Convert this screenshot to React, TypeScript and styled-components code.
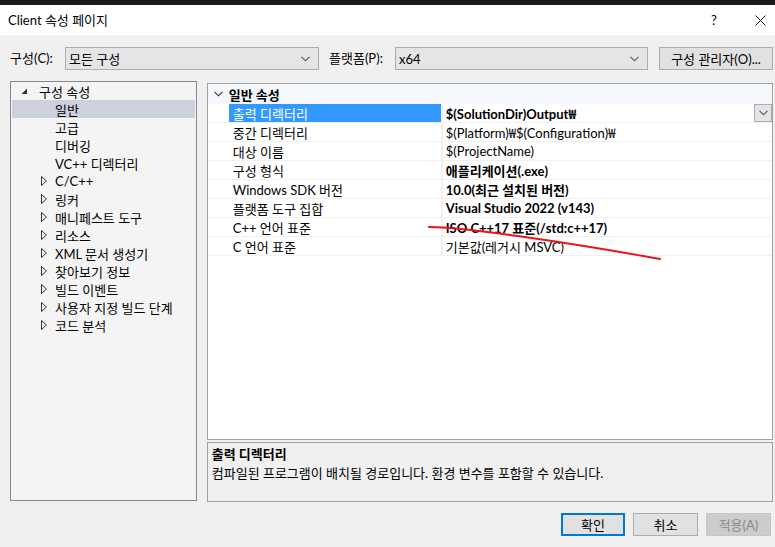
import React from 'react';
import styled, { createGlobalStyle } from 'styled-components';

const GlobalStyle = createGlobalStyle`
  html, body {
    margin: 0;
    padding: 0;
    background: #f0f0f0;
  }
  body {
    font-family: Lato, "Noto Sans CJK KR", sans-serif;
    font-size: 13px;
    color: #000;
  }
`;

const Window = styled.div`
  position: relative;
  width: 775px;
  height: 547px;
  overflow: hidden;
  background: #f0f0f0;
  display: flex;
  flex-direction: column;
`;

const TopStrip = styled.div`
  height: 5px;
  background: #1b1b1c;
`;

const TitleBar = styled.div`
  height: 30px;
  background: #fff;
  display: flex;
  align-items: center;
  padding-left: 8px;
`;

const Title = styled.span`
  flex: 1;
  line-height: 16px;
`;

const TitleControls = styled.div`
  display: flex;
  margin-right: -8px;
`;

const TitleButton = styled.span`
  width: 46px;
  display: flex;
  justify-content: center;
  align-items: center;
  font-size: 13px;
`;

const ConfigRow = styled.div`
  height: 46px;
  box-sizing: border-box;
  padding: 12px 0 0 10px;
  display: flex;
  align-items: flex-start;
`;

const Label = styled.span<{ width: number }>`
  width: ${({ width }) => width}px;
  height: 23px;
  line-height: 23px;
  white-space: nowrap;
`;

const Combo = styled.div<{ width: number }>`
  width: ${({ width }) => width}px;
  height: 23px;
  box-sizing: border-box;
  border: 1px solid #adadad;
  background: #e5e5e5;
  display: flex;
  align-items: center;
  padding: 0 8px 0 3px;
`;

const ComboText = styled.span`
  flex: 1;
`;

const PushButton = styled.button<{ width: number; primary?: boolean; disabled?: boolean }>`
  width: ${({ width }) => width}px;
  height: 23px;
  box-sizing: border-box;
  margin: 0;
  padding: 0;
  font-family: inherit;
  font-size: 13px;
  color: ${({ disabled }) => (disabled ? '#8a8a8a' : '#000')};
  background: ${({ disabled }) => (disabled ? '#cccccc' : '#e1e1e1')};
  border: ${({ primary, disabled }) =>
    primary ? '2px solid #0078d7' : disabled ? '1px dotted #bfbfbf' : '1px solid #adadad'};
`;

const Main = styled.div`
  display: flex;
  gap: 10px;
  padding: 0 2px 0 10px;
`;

const TreePanel = styled.div`
  width: 187px;
  height: 420px;
  box-sizing: border-box;
  border: 1px solid #828790;
  background: #f4f4f4;
  padding: 0 1px 1px;
`;

const TreeRow = styled.div<{ indent: number; selected?: boolean }>`
  height: 18px;
  display: flex;
  align-items: center;
  padding-left: ${({ indent }) => indent}px;
  background: ${({ selected }) => (selected ? '#cdd1de' : 'transparent')};
  white-space: nowrap;
`;

const Toggle = styled.span`
  width: 14px;
  display: flex;
  align-items: center;
`;

const RightColumn = styled.div`
  width: 567px;
  display: flex;
  flex-direction: column;
  gap: 2px;
  padding-top: 2px;
`;

const Grid = styled.div`
  height: 357px;
  box-sizing: border-box;
  border: 1px solid #a0a0a0;
  background: #fff;
`;

const GroupHeader = styled.div`
  height: 20px;
  background: #f4f7fc;
  display: flex;
  align-items: center;
  font-weight: 700;
`;

const Gutter = styled.span`
  width: 21px;
  display: flex;
  justify-content: center;
  align-items: center;
  flex-shrink: 0;
`;

const PropRow = styled.div`
  height: 19px;
  display: flex;
  box-sizing: border-box;
  border-bottom: 1px solid #f0f0f0;
`;

const NameCell = styled.div<{ selected?: boolean }>`
  width: 214px;
  padding-left: 4px;
  box-sizing: border-box;
  display: flex;
  align-items: center;
  border-right: 2px solid #f0f0f0;
  background: ${({ selected }) => (selected ? '#3399ff' : '#fff')};
  color: ${({ selected }) => (selected ? '#fff' : '#000')};
`;

const ValueCell = styled.div<{ bold?: boolean }>`
  flex: 1;
  padding-left: 3px;
  display: flex;
  align-items: center;
  font-weight: ${({ bold }) => (bold ? 700 : 400)};
`;

const ValueText = styled.span`
  flex: 1;
  white-space: pre;
`;

// Windows Korean fonts draw the backslash as a won sign
const Won = styled.span`
  font-family: "Noto Sans CJK KR", sans-serif;
`;

const DropButton = styled.span`
  width: 18px;
  height: 18px;
  box-sizing: border-box;
  border: 1px solid #adadad;
  background: #e5e5e5;
  display: flex;
  justify-content: center;
  align-items: center;
`;

const Description = styled.div`
  height: 60px;
  box-sizing: border-box;
  border: 1px solid #a0a0a0;
  padding: 3px 4px;
  display: flex;
  flex-direction: column;
  gap: 2px;
`;

const DescTitle = styled.span`
  font-weight: 700;
  line-height: 17px;
`;

const DescText = styled.span`
  line-height: 17px;
`;

const Footer = styled.div`
  display: flex;
  justify-content: flex-end;
  gap: 8px;
  padding: 11px 4px 0 0;
`;

const Annotation = styled.svg`
  position: absolute;
  left: 0;
  top: 0;
  pointer-events: none;
`;

const Chevron = ({ color = '#444' }: { color?: string }) => (
  <svg width="9" height="6" viewBox="0 0 9 6">
    <polyline points="0.5,0.8 4.5,4.8 8.5,0.8" fill="none" stroke={color} strokeWidth="1.1" />
  </svg>
);

const Expanded = () => (
  <svg width="7" height="7" viewBox="0 0 7 7">
    <polygon points="6,0.5 6,6 0.5,6" fill="#333" />
  </svg>
);

const Collapsed = () => (
  <svg width="6" height="10" viewBox="0 0 6 10">
    <polygon points="0.5,0.5 5.5,5 0.5,9.5" fill="none" stroke="#333" strokeWidth="1" />
  </svg>
);

const CloseIcon = () => (
  <svg width="11" height="11" viewBox="0 0 11 11">
    <path d="M0.5 0.5 L10.5 10.5 M10.5 0.5 L0.5 10.5" stroke="#111" strokeWidth="1" />
  </svg>
);

const withWon = (text: string) =>
  text.split('₩').map((part, i) => (
    <React.Fragment key={i}>
      {i > 0 && <Won>₩</Won>}
      {part}
    </React.Fragment>
  ));

interface TreeItem {
  label: string;
  expandable?: boolean;
  selected?: boolean;
}

const treeItems: TreeItem[] = [
  { label: '일반', selected: true },
  { label: '고급' },
  { label: '디버깅' },
  { label: 'VC++ 디렉터리' },
  { label: 'C/C++', expandable: true },
  { label: '링커', expandable: true },
  { label: '매니페스트 도구', expandable: true },
  { label: '리소스', expandable: true },
  { label: 'XML 문서 생성기', expandable: true },
  { label: '찾아보기 정보', expandable: true },
  { label: '빌드 이벤트', expandable: true },
  { label: '사용자 지정 빌드 단계', expandable: true },
  { label: '코드 분석', expandable: true },
];

interface Property {
  name: string;
  value: string;
  bold?: boolean;
}

const properties: Property[] = [
  { name: '출력 디렉터리', value: '$(SolutionDir)Output₩', bold: true },
  { name: '중간 디렉터리', value: '$(Platform)₩$(Configuration)₩' },
  { name: '대상 이름', value: '$(ProjectName)' },
  { name: '구성 형식', value: '애플리케이션(.exe)', bold: true },
  { name: 'Windows SDK 버전', value: '10.0(최근 설치된 버전)', bold: true },
  { name: '플랫폼 도구 집합', value: 'Visual Studio 2022 (v143)', bold: true },
  { name: 'C++ 언어 표준', value: 'ISO C++17 표준(/std:c++17)', bold: true },
  { name: 'C 언어 표준', value: '기본값(레거시 MSVC)' },
];

const App: React.FC = () => (
  <Window>
    <GlobalStyle />
    <TopStrip />
    <TitleBar>
      <Title>Client 속성 페이지</Title>
      <TitleControls>
        <TitleButton>?</TitleButton>
        <TitleButton>
          <CloseIcon />
        </TitleButton>
      </TitleControls>
    </TitleBar>

    <ConfigRow>
      <Label width={55}>구성(C):</Label>
      <Combo width={254}>
        <ComboText>모든 구성</ComboText>
        <Chevron color="#5b4a72" />
      </Combo>
      <Label width={10} />
      <Label width={66}>플랫폼(P):</Label>
      <Combo width={253}>
        <ComboText>x64</ComboText>
        <Chevron color="#5b4a72" />
      </Combo>
      <Label width={11} />
      <PushButton width={114}>구성 관리자(O)...</PushButton>
    </ConfigRow>

    <Main>
      <TreePanel>
        <TreeRow indent={7}>
          <Toggle style={{ paddingLeft: 2 }}>
            <Expanded />
          </Toggle>
          <span style={{ paddingLeft: 4 }}>구성 속성</span>
        </TreeRow>
        {treeItems.map((item) => (
          <TreeRow key={item.label} indent={item.expandable ? 29 : 43} selected={item.selected}>
            {item.expandable && (
              <Toggle>
                <Collapsed />
              </Toggle>
            )}
            {item.label}
          </TreeRow>
        ))}
      </TreePanel>

      <RightColumn>
        <Grid>
          <GroupHeader>
            <Gutter>
              <Chevron color="#333" />
            </Gutter>
            일반 속성
          </GroupHeader>
          {properties.map((p, i) => (
            <PropRow key={p.name}>
              <Gutter />
              <NameCell selected={i === 0}>{p.name}</NameCell>
              <ValueCell bold={p.bold}>
                <ValueText>{withWon(p.value)}</ValueText>
                {i === 0 && (
                  <DropButton>
                    <Chevron color="#5b4a72" />
                  </DropButton>
                )}
              </ValueCell>
            </PropRow>
          ))}
        </Grid>
        <Description>
          <DescTitle>출력 디렉터리</DescTitle>
          <DescText>컴파일된 프로그램이 배치될 경로입니다. 환경 변수를 포함할 수 있습니다.</DescText>
        </Description>
      </RightColumn>
    </Main>

    <Footer>
      <PushButton width={64} primary>
        확인
      </PushButton>
      <PushButton width={65}>취소</PushButton>
      <PushButton width={65} disabled>
        적용(A)
      </PushButton>
    </Footer>

    <Annotation width="775" height="547">
      <path
        d="M429 227 C 462 227, 560 241, 660 259"
        fill="none"
        stroke="#e8141c"
        strokeWidth="2"
        strokeLinecap="round"
      />
    </Annotation>
  </Window>
);

export default App;
